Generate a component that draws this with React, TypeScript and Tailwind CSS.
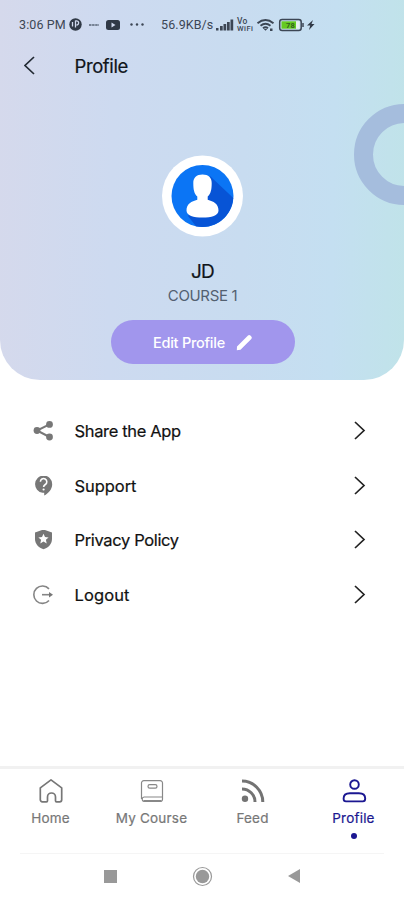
import type { ReactNode } from "react";

const menuItems = [
  { title: "Share the App", icon: <ShareIcon />, tracking: "tracking-[-0.35px]" },
  { title: "Support", icon: <SupportIcon />, tracking: "tracking-[-0.05px]" },
  { title: "Privacy Policy", icon: <PrivacyIcon />, tracking: "tracking-[-0.35px]" },
  { title: "Logout", icon: <LogoutIcon />, tracking: "tracking-[0.1px]" },
];

const tabs = [
  { title: "Home", icon: <HomeIcon />, active: false },
  { title: "My Course", icon: <CourseIcon />, active: false },
  { title: "Feed", icon: <FeedIcon />, active: false },
  { title: "Profile", icon: <PersonIcon />, active: true },
];

function ShareIcon() {
  return (
    <svg width="20" height="20" viewBox="0 0 20 20" fill="#777" stroke="#777">
      <path d="M16.5 3.3 4 9.5 16.5 16" fill="none" strokeWidth="2" />
      <circle cx="16.5" cy="3.4" r="3.4" stroke="none" />
      <circle cx="4" cy="9.5" r="3.4" stroke="none" />
      <circle cx="16.5" cy="16" r="3.4" stroke="none" />
    </svg>
  );
}

function SupportIcon() {
  return (
    <svg width="20" height="20" viewBox="0 0 20 20">
      <path d="M10.5 -.5a8.7 8.7 0 0 0-1 17.3h1.7v2.7c4.3-2.1 8-6.500 8-11.300A8.7 8.7 0 0 0 10.5 -.5Z" fill="#777" />
      <path d="M7.400 5.800a3.200 3.200 0 1 1 4.900 2.700c-1.200.8-1.700 1.300-1.700 2.500" fill="none" stroke="#fff" strokeWidth="1.600" />
      <circle cx="10.600" cy="13.500" r="1.100" fill="#fff" />
    </svg>
  );
}

function PrivacyIcon() {
  return (
    <svg width="20" height="20" viewBox="0 0 20 20">
      <path d="M10.500 -.5 19 2.500v6.500c0 4.800-3.700 8.800-8.500 10.300C5.700 17.800 2 13.800 2 9V2.500Z" fill="#777" />
      <path d="m10.500 3.700 1.500 3.300 3.600.4-2.700 2.400.8 3.600-3.200-1.900-3.200 1.900.8-3.600-2.700-2.400 3.600-.4Z" fill="#fff" />
    </svg>
  );
}

function LogoutIcon() {
  return (
    <svg width="20" height="20" viewBox="0 0 20 20" fill="none" stroke="#858585" strokeWidth="1.6">
      <path d="M16 3.900A8.700 8.700 0 1 0 16 15.500" />
      <path d="M9 9.700h9" />
      <path d="m16 6.900 4 2.800-4 2.800Z" fill="#777" stroke="none" />
    </svg>
  );
}

function HomeIcon() {
  return (
    <svg width="26" height="26" viewBox="0 0 26 26" fill="none" stroke="#777" strokeWidth="1.7" strokeLinejoin="round">
      <path d="M2.300 9.900 13 1.900l10.700 8v11.900a2 2 0 0 1-2 2h-3.200a1 1 0 0 1-1-1V19a4 4 0 0 0-8 0v3.800a1 1 0 0 1-1 1H4.300a2 2 0 0 1-2-2Z" />
    </svg>
  );
}

function CourseIcon() {
  return (
    <svg width="26" height="26" viewBox="0 0 26 26" fill="none" stroke="#888" strokeWidth="1.2">
      <path d="M2.500 21V5A2.300 2.300 0 0 1 4.800 2.700h16.400A2.300 2.300 0 0 1 23.500 5v14H5a2.300 2.300 0 0 0 0 4.500h16.200a2.300 2.300 0 0 0 2.300-2.500v-3" />
      <rect x="9" y="6.700" width="9" height="3.500" rx="1.700" />
      <path d="M4.500 22.900H22" strokeWidth="1.800" />
    </svg>
  );
}

function FeedIcon() {
  return (
    <svg width="26" height="26" viewBox="0 0 26 26" fill="none" stroke="#737373" strokeWidth="3">
      <circle cx="5" cy="20.700" r="3.200" fill="#737373" stroke="none" />
      <path d="M2 10.900a13 13 0 0 1 13 13" />
      <path d="M2 3.100a20.800 20.800 0 0 1 20.800 20.800" />
    </svg>
  );
}

function PersonIcon() {
  return (
    <svg width="26" height="26" viewBox="0 0 26 26" fill="none" stroke="#1b1791" strokeWidth="1.9">
      <circle cx="13.500" cy="6.500" r="4.300" />
      <path d="M2.600 20.500c0-3.600 2.500-5.200 6.300-5.200h9c3.800 0 6.300 1.600 6.300 5.200 0 1.900-.8 2.900-2.400 2.900H5c-1.600 0-2.400-1-2.400-2.900Z" />
    </svg>
  );
}

function StatusBar() {
  return (
    <div className="flex h-[50px] items-center pl-[19px] font-[Roboto,sans-serif] text-[12.5px] tracking-[0.1px] text-[#3c4654]">
      <span className="w-[49px] whitespace-nowrap">3:06 PM</span>
      <svg className="shrink-0" width="93" height="16" viewBox="0 0 93 16">
        <circle cx="7.500" cy="7.500" r="6.200" fill="#303946" />
        <path d="M4.500 5v4.500M7.500 3.500v7M7.500 4c4-1 4 4 1 4" fill="none" stroke="#d1daee" strokeWidth="1.300" />
        <path d="M21 8h10" stroke="#748092" strokeWidth="2" strokeDasharray="2.500 .6" />
        <rect x="38" y="3" width="14" height="10" rx="2.500" fill="#303946" />
        <path d="m43.500 5.500 4 2.500-4 2.500Z" fill="#d1daee" />
        <circle cx="63.500" cy="7.500" r="1.200" fill="#3c4654" />
        <circle cx="69" cy="7.500" r="1.200" fill="#3c4654" />
        <circle cx="74.500" cy="7.500" r="1.200" fill="#3c4654" />
      </svg>
      <span className="w-[54px] whitespace-nowrap">56.9KB/s</span>
      <svg className="shrink-0" width="20" height="16" viewBox="0 0 20 16" fill="#3c4654">
        <rect x="1" y="11" width="2.500" height="2.500" />
        <rect x="5" y="9" width="2.700" height="4.500" />
        <rect x="8.500" y="7" width="2.700" height="6.500" />
        <rect x="12" y="5" width="2.700" height="8.500" />
        <rect x="15.500" y="2.500" width="2.700" height="11" />
      </svg>
      <svg className="shrink-0" width="20" height="18" viewBox="0 0 20 18" fill="#3c4654" fontWeight="500">
        <text x="2" y="7.500" fontSize="8.500">Vo</text>
        <text x="2" y="15" fontSize="7.500" textLength="16">WiFi</text>
      </svg>
      <svg className="shrink-0" width="64" height="16" viewBox="0 0 64 16" fill="none" stroke="#3c4654">
        <path d="M2.500 6.200q8-6.500 16 0M5.500 8.800q5-4 10 0M8 11.200q2.500-2 5 0" strokeWidth="1.900" />
        <path d="m8.800 12 1.700 1.800 1.700-1.800ZM15 11.500h2.500V14H15Z" fill="#3c4654" stroke="none" />
        <rect x="24.700" y="2.500" width="21.500" height="11" rx="2.500" strokeWidth="1.500" />
        <rect x="26.500" y="4.300" width="14.500" height="7.400" fill="#65ca20" stroke="none" />
        <rect x="41" y="4.300" width="3.500" height="7.400" fill="#e6f0ef" stroke="none" />
        <path d="M48 6v4" strokeWidth="1.500" />
        <path d="m58 3-6 5.500h3.200L54 13l5.500-6H56.500Z" fill="#303946" stroke="none" />
        <text x="31" y="10.700" fontSize="7.500" fontWeight="700" fill="#31611e" stroke="none">78</text>
      </svg>
    </div>
  );
}

function Avatar() {
  return (
    <svg className="shrink-0" width="82" height="82" viewBox="0 0 82 82">
      <circle cx="41.500" cy="41" r="40.500" fill="#fff" />
      <circle cx="41.500" cy="41" r="31" fill="#0b75f5" />
      <path d="M49 21 72.300 43A31 31 0 0 1 35 71.300L27 61l14-18Z" fill="#0754d6" />
      <path d="M41.500 19.500c6 0 9.200 3.200 9.200 8.500 0 7-1 10.800-4 13.500v3.200c5.800 1.800 10.800 3.800 10.800 10.800 0 5.200-7 7-16 7s-16-1.800-16-7c0-7 5-9 10.800-10.800v-3.200c-3-2.700-4-6.500-4-13.500 0-5.300 3.200-8.500 9.200-8.500Z" fill="#fff" />
    </svg>
  );
}

function MenuRow({ title, icon, tracking }: { title: string; icon: ReactNode; tracking: string }) {
  return (
    <button className="flex h-[54.5px] w-full items-center pl-[33px] pr-[38px] text-left">
      {icon}
      <span className={`ml-[21.5px] flex-1 pt-px text-[16.5px] text-[#111] [-webkit-text-stroke:0.2px] ${tracking}`}>{title}</span>
      <svg width="12" height="20" viewBox="0 0 12 20" fill="none" stroke="#222" strokeWidth="1.7">
        <path d="m1 1 9 8.500-9 8.500" />
      </svg>
    </button>
  );
}

export default function App() {
  return (
    <div className="flex h-[900px] w-[404px] flex-col overflow-hidden bg-white font-[Inter,sans-serif]">
      <header className="relative h-[380px] shrink-0 overflow-hidden rounded-b-[40px] bg-[linear-gradient(91deg,#d5d9ec_0%,#cddaf0_28%,#c8dcf0_60%,#c4dff1_82%,#c0e3e9_100%)]">
        <div className="absolute left-[354px] top-[104px] size-[101px] rounded-full border-[19px] border-[#a5bddd]" />
        <StatusBar />
        <div className="flex h-[32px] items-center pl-[24px]">
          <svg width="12" height="20" viewBox="0 0 12 20" fill="none" stroke="#222a33" strokeWidth="1.7">
            <path d="m10 1-9 8.500 9 8.500" />
          </svg>
          <h1 className="ml-[38.5px] pt-px text-[18.5px] tracking-[-0.4px] text-[#10151a] [-webkit-text-stroke:0.2px]">Profile</h1>
        </div>
        <div className="flex flex-col items-center pt-[73px]">
          <Avatar />
          <h2 className="mt-[23px] pl-px text-[19px] leading-6 tracking-[-0.9px] text-[#10151a] [-webkit-text-stroke:0.2px]">JD</h2>
          <p className="pl-px text-[15px] leading-6 tracking-[-0.35px] text-[#536070]">COURSE 1</p>
          <button className="ml-px mt-[12px] flex h-[44px] w-[184px] items-center rounded-full bg-[#a196ed] pl-[42.5px] text-left text-[14.5px] font-medium tracking-[-0.25px] text-white">
            <span className="w-[83px] whitespace-nowrap pt-0.5">Edit Profile</span>
            <svg width="17" height="17" viewBox="0 0 17 17" fill="#fff">
              <path d="M1 12.500 12 1.600a1.700 1.700 0 0 1 2.400 0l.9.9a1.700 1.700 0 0 1 0 2.400L4.500 15.700l-3.700.6Z" />
            </svg>
          </button>
        </div>
      </header>

      <main className="flex-1 pt-[24px]">
        {menuItems.map((item) => (
          <MenuRow key={item.title} {...item} />
        ))}
      </main>

      <nav className="grid h-[87px] shrink-0 grid-cols-4 border-t-[3px] border-[#f1f1f1]">
        {tabs.map((tab) => (
          <div key={tab.title} className="flex flex-col items-center pt-[9px]">
            {tab.icon}
            <span className={`mt-[4px] text-[13.5px] leading-5 tracking-[0.2px] [-webkit-text-stroke:0.2px] ${tab.active ? "text-[#1b1791]" : "text-[#777]"}`}>{tab.title}</span>
            {tab.active && <span className="mt-[5px] size-[6px] rounded-full bg-[#1b1791]" />}
          </div>
        ))}
      </nav>

      <footer className="flex h-[47px] shrink-0 flex-col">
        <div className="mx-5 h-px bg-[#f5f5f5]" />
        <div className="flex flex-1 items-center pb-[2px] pl-[104px]">
          <span className="size-[13px] bg-[#999]" />
          <svg className="ml-[75px]" width="21" height="21" viewBox="0 0 21 21" fill="none" stroke="#999">
            <circle cx="10.500" cy="10.500" r="9" strokeWidth="1.2" />
            <circle cx="10.500" cy="10.500" r="6.700" fill="#999" stroke="none" />
          </svg>
          <svg className="ml-[75px]" width="12" height="14" viewBox="0 0 12 14" fill="#999">
            <path d="M0 7 12 0v14Z" />
          </svg>
        </div>
      </footer>
    </div>
  );
}
